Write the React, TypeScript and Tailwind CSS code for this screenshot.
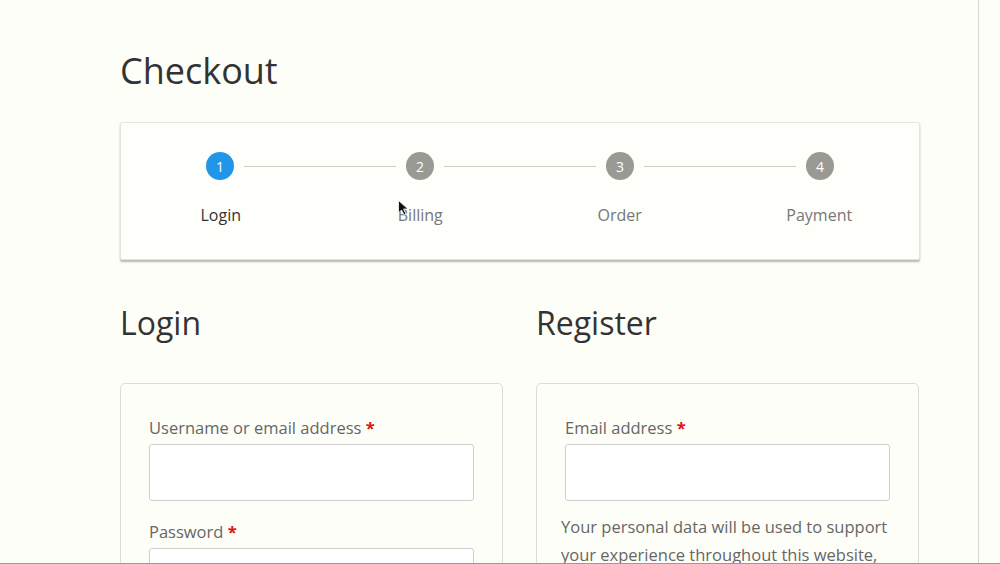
import { Fragment } from 'react'

const STEPS = [
  { n: 1, label: 'Login', active: true },
  { n: 2, label: 'Billing', active: false },
  { n: 3, label: 'Order', active: false },
  { n: 4, label: 'Payment', active: false },
]

const Field = ({ label, className = '' }: { label: string; className?: string }) => (
  <div className={className}>
    <label className="block text-[16.5px] leading-[24px] text-[#666]">
      {label} <span className="font-bold text-[#e01010]">*</span>
    </label>
    <div className="mt-[4px] h-[57px] rounded-[3px] border border-[#cfcfcf] bg-white" />
  </div>
)

export default function App() {
  return (
    <div
      className="relative h-[564px] w-[1000px] overflow-hidden border-b border-[#9a9a9a] bg-[#fefef8]"
      style={{ fontFamily: '"Open Sans", "Noto Sans", sans-serif' }}
    >
      <div className="h-full w-[979px] border-r border-[#d8d8d0] pl-[120px]">
        <div className="w-[800px]">
          <h1 className="pt-[49px] text-[36px] leading-[43px] text-[#333]">Checkout</h1>

          {/* Stepper */}
          <div className="mt-[30px] h-[138px] rounded-[2px] border border-[#e4e4e0] bg-[#fefefb] shadow-[0_2px_2px_rgba(0,0,0,0.28)]">
            <div className="flex items-center pl-[85px] pt-[29px]">
              {STEPS.map((s, i) => (
                <Fragment key={s.n}>
                  <div
                    className={`flex h-[28px] w-[28px] items-center justify-center rounded-full text-[14px] text-white ${
                      s.active ? 'bg-[#2196e8]' : 'bg-[#9a9a94]'
                    }`}
                  >
                    {s.n}
                  </div>
                  {i < STEPS.length - 1 && <div className="mx-[10px] h-px w-[152px] bg-[#cdcdc8]" />}
                </Fragment>
              ))}
            </div>
            <div className="mt-[24px] grid grid-cols-4 text-center text-[16px] leading-[22px]">
              {STEPS.map((s) => (
                <div key={s.n} className={s.active ? 'text-[#333]' : 'text-[#777]'}>
                  {s.label}
                </div>
              ))}
            </div>
          </div>

          {/* Login / Register */}
          <div className="mt-[43px] grid grid-cols-[383px_383px] gap-[33px]">
            <div>
              <h2 className="text-[32px] leading-[40px] text-[#333]">Login</h2>
              <div className="mt-[40px] h-[300px] rounded-[5px] border border-[#dcdcd6] px-[28px] pt-[32px]">
                <Field label="Username or email address" />
                <Field label="Password" className="mt-[19px]" />
              </div>
            </div>
            <div>
              <h2 className="text-[32px] leading-[40px] text-[#333]">Register</h2>
              <div className="mt-[40px] h-[300px] rounded-[5px] border border-[#dcdcd6] px-[28px] pt-[32px]">
                <Field label="Email address" />
                <p className="ml-[-4px] mt-[12px] text-[16.5px] leading-[28px] text-[#666]">
                  Your personal data will be used to support your experience throughout this website, to manage access
                  to your account, and for other purposes described in our privacy policy.
                </p>
              </div>
            </div>
          </div>
        </div>
      </div>

      {/* mouse cursor */}
      <svg className="absolute left-[398px] top-[200px]" width="11" height="16" viewBox="0 0 11 16">
        <path d="M0.5 0.5 L0.5 13 L3.5 10 L6 15 L8 14 L5.5 9 L10 9 Z" fill="#111" stroke="#fff" strokeWidth="0.8" />
      </svg>
    </div>
  )
}
